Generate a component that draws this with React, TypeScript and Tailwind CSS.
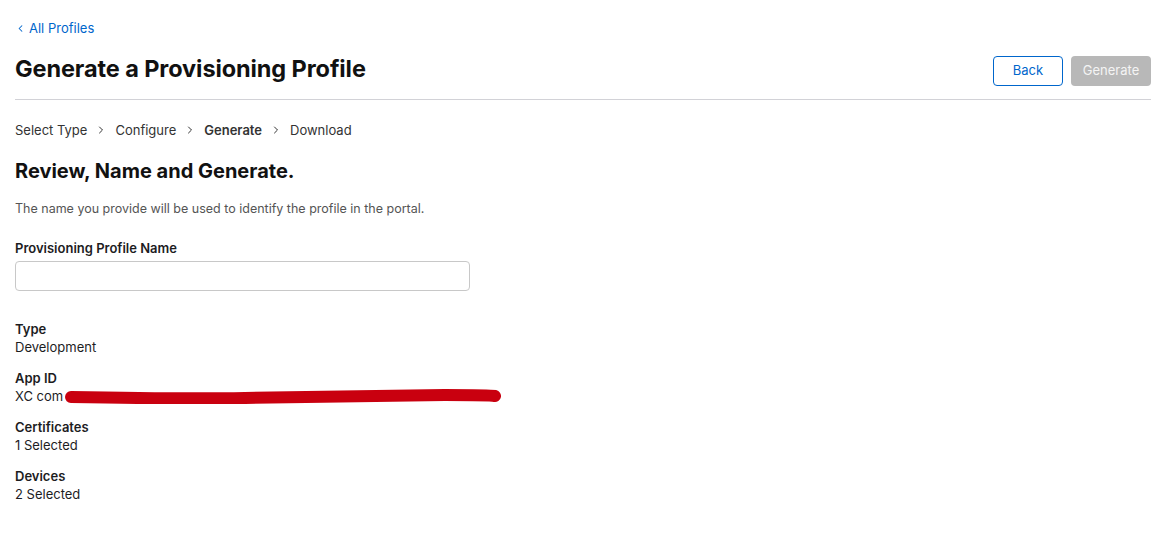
import { ChevronLeft, ChevronRight } from "lucide-react";

function Scribble() {
  return (
    <svg width="436" height="16" viewBox="0 0 436 16" className="ml-[2px] inline-block align-middle" aria-hidden="true">
      <path
        d="M6 9 C 60 10, 120 11, 180 10 C 250 9, 320 8, 380 7 C 410 7, 425 7, 430 8"
        fill="none"
        stroke="#c9000f"
        strokeWidth="12"
        strokeLinecap="round"
      />
    </svg>
  );
}

function Field({ label, children }: { label: string; children: React.ReactNode }) {
  return (
    <div className="leading-[18px]">
      <div className="font-semibold text-[#1d1d1f]">{label}</div>
      <div className="text-[#1d1d1f]">{children}</div>
    </div>
  );
}

export default function App() {
  const steps = ["Select Type", "Configure", "Generate", "Download"];

  return (
    <div
      className="min-h-[534px] bg-white px-[15px] pt-[19px] text-[13px] text-[#1d1d1f] antialiased"
      style={{ fontFamily: "Inter, 'Liberation Sans', sans-serif" }}
    >
      <a href="#" className="flex items-center gap-[3px] text-[13px] leading-[18px] text-[#0066cc]">
        <ChevronLeft size={11} strokeWidth={2.2} />
        All Profiles
      </a>

      <div className="mr-[7px] flex items-center justify-between border-b border-[#d2d2d7] pt-[14px] pb-[13px]">
        <h1 className="text-[23.5px] font-bold tracking-[-0.1px] text-[#111]">Generate a Provisioning Profile</h1>
        <div className="mt-[4px] flex gap-[8px]">
          <button className="h-[30px] w-[70px] rounded-[4px] border border-[#0066cc] text-[13px] text-[#0066cc]">
            Back
          </button>
          <button className="h-[30px] w-[80px] rounded-[4px] bg-[#b8b8b8] text-[13px] text-[#f4f4f4]">
            Generate
          </button>
        </div>
      </div>

      <div className="mt-[21px] flex items-center gap-[8px] text-[13px] leading-[18px] text-[#333]">
        {steps.map((s, i) => (
          <div key={s} className="flex items-center gap-[8px]">
            {i > 0 && <ChevronRight size={12} strokeWidth={2} className="text-[#333]" />}
            <span className={s === "Generate" ? "font-semibold" : ""}>{s}</span>
          </div>
        ))}
      </div>

      <h2 className="mt-[19px] text-[20px] font-bold leading-[26px] text-[#111]">Review, Name and Generate.</h2>

      <p className="mt-[16px] text-[12.5px] leading-[18px] text-[#555]">
        The name you provide will be used to identify the profile in the portal.
      </p>

      <label className="mt-[21px] block text-[13px] font-semibold leading-[18px] text-[#1d1d1f]">
        Provisioning Profile Name
      </label>
      <input
        type="text"
        className="mt-[4px] block h-[30px] w-[455px] rounded-[4px] border border-[#c8c8c8] px-2 text-[13px] outline-none"
      />

      <div className="mt-[29px] flex flex-col gap-[13px] text-[13px]">
        <Field label="Type">Development</Field>
        <Field label="App ID">
          <span className="inline-flex items-center">
            XC com
            <Scribble />
          </span>
        </Field>
        <Field label="Certificates">1 Selected</Field>
        <Field label="Devices">2 Selected</Field>
      </div>
    </div>
  );
}
